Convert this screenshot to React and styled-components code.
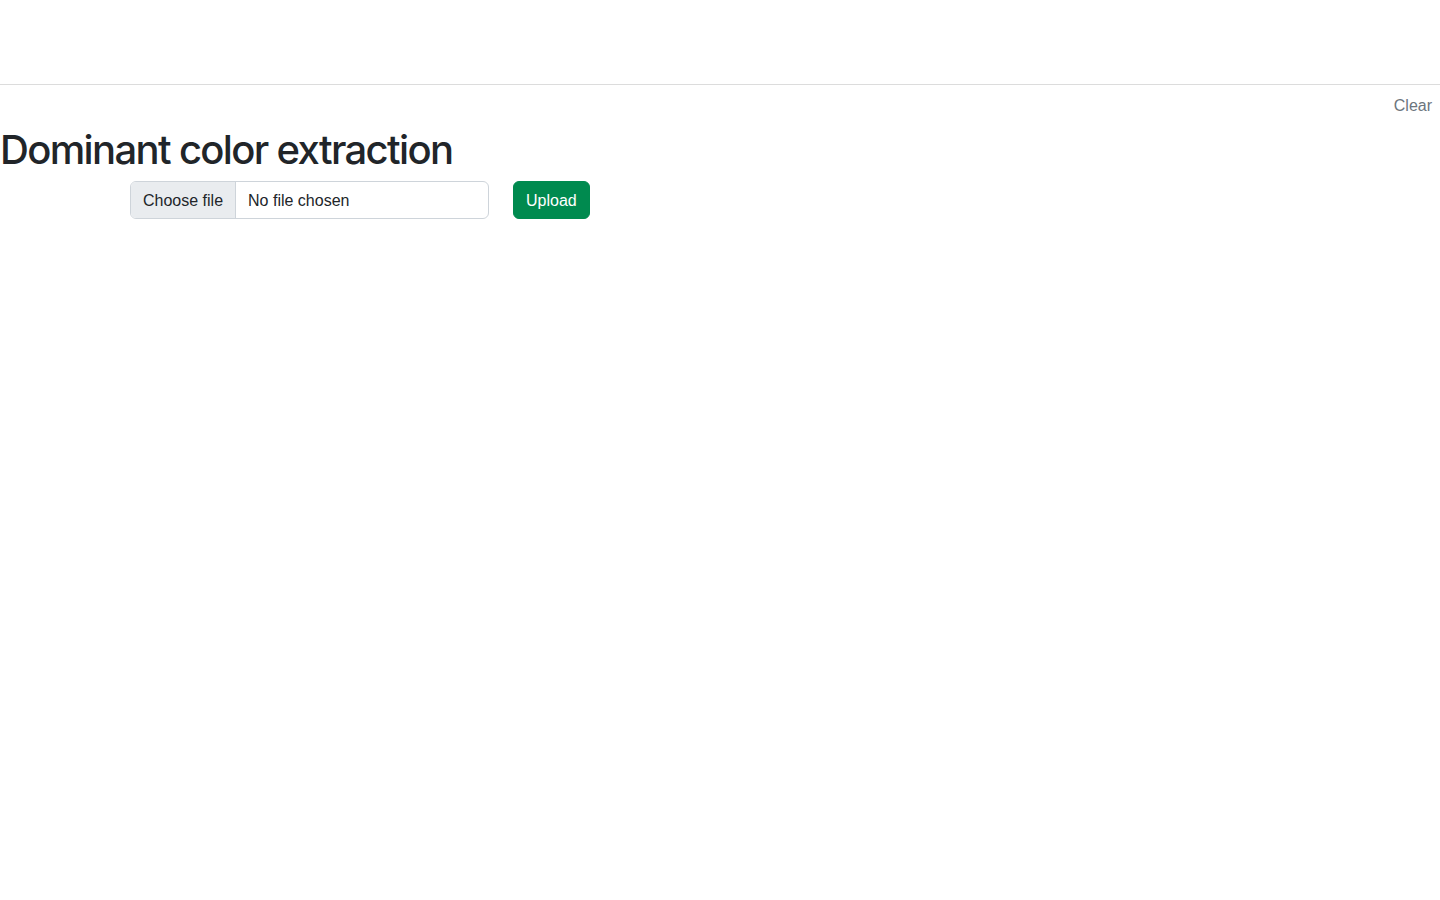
import React from "react";
import styled, { createGlobalStyle } from "styled-components";

const Global = createGlobalStyle`
  html, body { margin: 0; padding: 0; background: #fff; }
  body {
    font-family: "Liberation Sans", Arial, sans-serif;
    font-size: 16px;
    line-height: 1.5;
    color: #212529;
  }
  * { box-sizing: border-box; }
`;

const Header = styled.header`
  height: 85px;
  border-bottom: 1px solid #dcdcdc;
`;

const Toolbar = styled.div`
  display: flex;
  justify-content: flex-end;
  padding: 9px 8px 0 0;
`;

const ClearLink = styled.a`
  color: #6c757d;
  font-size: 16px;
  line-height: 24px;
  text-decoration: none;
  cursor: pointer;
`;

const Title = styled.h1`
  margin: 8px 0 7px 0;
  font-family: Inter, "Liberation Sans", Arial, sans-serif;
  font-size: 40px;
  line-height: 48px;
  font-weight: 500;
  color: #212529;
  letter-spacing: -1.65px;
`;

const Form = styled.form`
  display: flex;
  align-items: center;
  gap: 24px;
  padding-left: 130px;
`;

const FileBox = styled.label`
  display: flex;
  width: 359px;
  height: 38px;
  border: 1px solid #ced4da;
  border-radius: 6px;
  overflow: hidden;
  background: #fff;
  cursor: pointer;
`;

const FileButton = styled.span`
  display: flex;
  align-items: center;
  padding: 1px 12px 0;
  background: #e9ecef;
  border-right: 1px solid #ced4da;
  color: #212529;
  font-size: 16px;
`;

const FileName = styled.span`
  display: flex;
  align-items: center;
  padding: 1px 12px 0;
  color: #212529;
  font-size: 16px;
`;

const HiddenInput = styled.input`
  display: none;
`;

const UploadButton = styled.button`
  height: 38px;
  padding: 1px 12px 0;
  border: 1px solid #008a4f;
  border-radius: 6px;
  background: #008a4f;
  color: #fff;
  font-family: inherit;
  font-size: 16px;
  cursor: pointer;
`;

export default function App() {
  return (
    <>
      <Global />
      <Header />
      <Toolbar>
        <ClearLink>Clear</ClearLink>
      </Toolbar>
      <Title>Dominant color extraction</Title>
      <Form onSubmit={(e) => e.preventDefault()}>
        <FileBox>
          <HiddenInput type="file" />
          <FileButton>Choose file</FileButton>
          <FileName>No file chosen</FileName>
        </FileBox>
        <UploadButton type="submit">Upload</UploadButton>
      </Form>
    </>
  );
}
